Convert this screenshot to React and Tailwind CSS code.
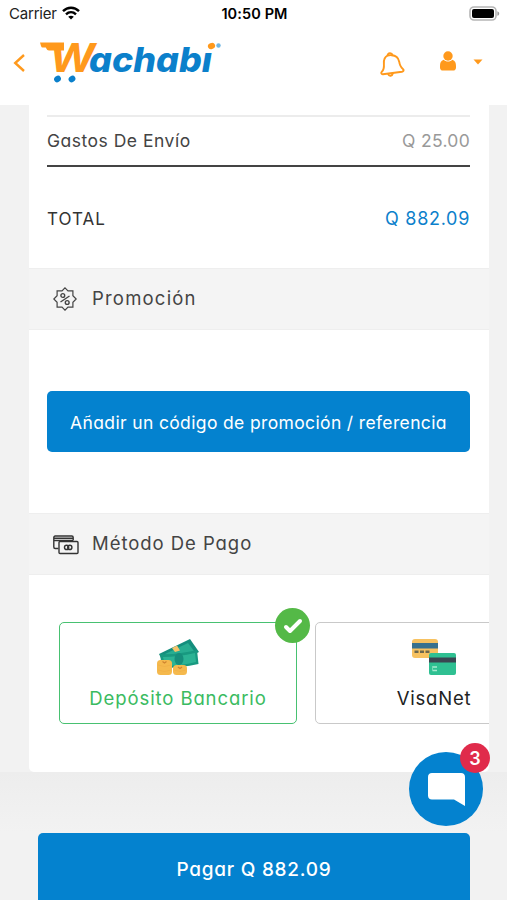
import React from 'react'

function StatusBar() {
  return (
    <div className="grid h-7 grid-cols-3 items-center pl-[9px] pr-[7px] text-[15px] text-[#222] [font-feature-settings:normal]">
      <div className="flex items-center gap-[5px]">
        <span className="tracking-[-0.2px]">Carrier</span>
        <svg className="-mt-[3px]" width="18" height="14" viewBox="0 0 18 14" fill="none" stroke="#000" strokeWidth="2.4">
          <path d="M1 5.2C5.6.6 12.4.6 17 5.2" />
          <path d="M4 8.4c2.9-2.8 7.1-2.8 10 0" />
          <path d="M9 13.5 6.2 10.7c1.6-1.4 4-1.4 5.6 0z" fill="#000" stroke="none" />
        </svg>
      </div>
      <span className="whitespace-nowrap text-center text-[14.5px] font-semibold tracking-[0.1px] text-black">10:50 PM</span>
      <svg className="-mt-[2px] justify-self-end" width="31" height="15" viewBox="0 0 31 15">
        <rect x="1" y="1" width="26" height="13" rx="4" fill="#fff" stroke="#b5b5b5" strokeWidth="1.6" />
        <rect x="3" y="3" width="22" height="9" rx="2" fill="#000" />
        <path d="M28.4 5.2c2.4.8 2.4 3.8 0 4.6z" fill="#999" />
      </svg>
    </div>
  )
}

function Logo() {
  return (
    <svg className="ml-[15px] -mt-1 overflow-visible" width="184" height="46" viewBox="0 0 184 46" fontFamily="Inter, sans-serif" fontWeight="800" fontStyle="italic">
      <path d="M0 4.500h24v8H9Q7 12.500 6.300 10.500L5.800 9.500H2.500Q1.500 9.500 1 8z" fill="#ff991c" />
      <text x="9" y="33.500" fontSize="40" fontWeight="700" textLength="46" lengthAdjust="spacingAndGlyphs" fill="#ff991c">W</text>
      <text x="49" y="33.500" fontSize="34" textLength="123" lengthAdjust="spacingAndGlyphs" fill="#0b80cb">achabı</text>
      <ellipse cx="171.500" cy="8" rx="3.700" ry="3" transform="rotate(-25 171.500 8)" fill="#ff991c" />
      <circle cx="178.500" cy="7.500" r="2.200" fill="#72b7e3" />
      <ellipse cx="17.500" cy="41" rx="3.600" ry="3" transform="rotate(-35 17.500 41)" fill="#0b80cb" />
      <ellipse cx="32" cy="41" rx="3.600" ry="3" transform="rotate(-35 32 41)" fill="#0b80cb" />
    </svg>
  )
}

function Header() {
  return (
    <header className="h-[105px] flex-shrink-0 bg-white">
      <StatusBar />
      <div className="flex h-[70px] items-center pl-[13px] pr-6">
        <svg width="12" height="18" viewBox="0 0 12 18" fill="none" stroke="#ff991c" strokeWidth="2.400">
          <path d="M11 1 2.200 9l8.800 8" />
        </svg>
        <Logo />
        <svg className="ml-auto mt-[3px]" width="26" height="26" viewBox="0 0 26 26" fill="none" stroke="#ff991c" strokeWidth="1.900" strokeLinejoin="round">
          <path d="M8.500 3.700C5.200 5.200 4.600 8.200 4.900 12c.3 4-.5 6.200-2 7.700-1.200 1.200-.6 2.700 1 2.600L23 19.700c1.700-.3 2.200-1.700.9-2.700-2.300-1.700-3.200-4-3.700-7.300C19.400 5.500 16 3.400 12.500 3.200 11 3.100 9.800 3.200 8.500 3.700z" />
          <path d="M8.500 3.700C8.900.7 12.700.4 13.700 3.300M9 22c1.100 2.600 4.300 2.200 5.100-.9" />
        </svg>
        <svg className="ml-[35px] -mt-1" width="16" height="20" viewBox="0 0 16 20" fill="#ff991c">
          <circle cx="8" cy="5" r="4.700" />
          <path d="M3.600 8.700c2.300 2.400 6.500 2.400 8.800 0 2.700.8 3.600 3.200 3.600 6.300v1.500c0 2-1.100 3.100-3 3.100H3c-1.900 0-3-1.100-3-3.100V15c0-3.100.9-5.500 3.600-6.300z" />
        </svg>
        <svg className="ml-[17px] -mt-[2px]" width="10" height="6" viewBox="0 0 10 6" fill="#ff991c">
          <path d="M.5.500h9L5 5.500z" />
        </svg>
      </div>
    </header>
  )
}

function PromoIcon() {
  return (
    <svg width="24" height="24" viewBox="0 0 24 24" fill="none" stroke="#444" strokeWidth="1.200">
      <path d="M12 .8l3 3h4.900v4.900L23.200 12l-3.300 3.300v4.900H15L12 23.200 9 20.200H4.100v-4.900L.8 12l3.300-3.300V3.800H9z" />
      <path d="M7.500 15l9-6" strokeWidth="1.400" />
      <circle cx="9.800" cy="8.500" r="1.900" strokeWidth="1.400" />
      <circle cx="14.200" cy="15.500" r="1.900" strokeWidth="1.400" />
    </svg>
  )
}

function PayIcon() {
  return (
    <svg className="mt-[2px]" width="26" height="20" viewBox="0 0 26 20" fill="none" stroke="#333" strokeWidth="1.400">
      <path d="M5.500 13.500H2.200C1.400 13.500.8 13 .8 12V2.500C.8 1.500 1.400 1 2.200 1h16.600c.8 0 1.400.5 1.400 1.500v3M1 3.300h19M1 5.500h19" />
      <rect x="6" y="6.500" width="19" height="12" rx="1" />
      <circle cx="13.600" cy="12.400" r="2.100" />
      <circle cx="16.800" cy="12.400" r="2.100" />
    </svg>
  )
}

function MoneyIcon() {
  return (
    <svg width="42" height="37" viewBox="0 0 42 37">
      <path d="M2 15 33 0l9 13-33 16z" fill="#148e7d" />
      <path d="M8 15 31 4l6 8-24 12z" fill="#28ad91" />
      <path d="M3 15q17 1 37-4l1.500 14Q24 29 5 29z" fill="#189980" />
      <path d="M6 18q15 0 32-4l1 9q-16 4-31 4z" fill="#2bb394" />
      <ellipse cx="22" cy="20" rx="4.500" ry="6" fill="#168e7b" />
      <path d="m15 9 5-2.500 3 5-5 1.500z" fill="#f5c36b" />
      <rect x="0" y="21" width="15" height="15" rx="3.500" fill="#f5b94d" />
      <rect x="16" y="26" width="14" height="10" rx="3.500" fill="#f5b94d" />
      <path d="M1 26q6.500 3 13 0M1 31q6.500 3 13 0M17 31q6 3 12 0" fill="none" stroke="#efad45" strokeWidth=".6" />
      <path d="m5.500 22.500 2 1.500 2-1.500M21 28l2 1.500 2-1.500" fill="none" stroke="#cf8430" strokeWidth="1.300" />
    </svg>
  )
}

function CardsIcon() {
  return (
    <svg width="44" height="36" viewBox="0 0 44 36">
      <rect x="0" y="0" width="26" height="19" rx="3" fill="#f7c261" />
      <path d="M0 4h26v5.500H0z" fill="#38718e" />
      <path d="M2.500 12.700H18" stroke="#6c684e" strokeWidth="2.400" strokeDasharray="4 1.500" />
      <rect x="17" y="14" width="27" height="22" rx="2" fill="#2fc092" />
      <path d="M17 18.500h27v5H17z" fill="#3a4651" />
      <path d="M20.500 28h4.500M20.500 31.500h4.500" stroke="#a6ead0" strokeWidth="1.500" />
      <path d="M20.500 27v5" stroke="#77d9b8" />
    </svg>
  )
}

function SectionTitle({ icon, children }) {
  return (
    <div className="flex h-[62px] items-center border-y border-[#eee] bg-[#f4f4f4] pl-[24px] text-[18.5px] text-[#444]">
      <span className="flex w-[39px]">{icon}</span>
      {children}
    </div>
  )
}

export default function App() {
  return (
    <div className="relative flex h-[900px] w-[507px] flex-col overflow-hidden bg-[#f2f2f2] font-['Inter',sans-serif] [font-feature-settings:'cv11']">
      <Header />
      <main className="ml-[29px] h-[667px] w-[460px] flex-shrink-0 overflow-hidden rounded-b-[5px] bg-white">
        <div className="ml-[18px] mr-[19px] mt-[10px] flex h-[50px] items-center justify-between border-t-2 border-[#ececec] text-[17.5px]">
          <span className="tracking-[0.5px] text-[#444]">Gastos De Envío</span>
          <span className="tracking-[0.3px] text-[#999]">Q 25.00</span>
        </div>
        <div className="ml-[18px] mr-[19px] flex h-[103px] items-center justify-between border-t-2 border-[#444] pt-[4px] text-[18px]">
          <span className="text-[17px] tracking-[1px] text-[#333]">TOTAL</span>
          <span className="-mt-[2px] tracking-[0.7px] text-[#0b80cb]">Q 882.09</span>
        </div>
        <SectionTitle icon={<PromoIcon />}>
          <span className="-mt-px tracking-[1.2px]">Promoción</span>
        </SectionTitle>
        <div className="py-[61px] pl-[18px] pr-[19px]">
          <button className="h-[61px] w-full whitespace-nowrap rounded-[5px] bg-[#0482cf] pt-[3px] text-[17.5px] tracking-[0.36px] text-white">
            Añadir un código de promoción / referencia
          </button>
        </div>
        <SectionTitle icon={<PayIcon />}>
          <span className="-mt-px tracking-[0.95px]">Método De Pago</span>
        </SectionTitle>
        <div className="flex gap-[18px] pl-[30px] pt-[47px] text-[18.5px]">
          <div className="relative flex h-[102px] w-[238px] flex-shrink-0 flex-col items-center rounded-[5px] border-[1.500px] border-[#48c171] pt-[16px] text-[#3abb61]">
            <MoneyIcon />
            <span className="mt-[9px] tracking-[0.9px]">Depósito Bancario</span>
            <span className="absolute -right-[14px] -top-[15px] flex h-[35px] w-[35px] items-center justify-center rounded-full bg-[#54b947]">
              <svg width="20" height="16" viewBox="0 0 20 16" fill="none" stroke="#fff" strokeWidth="4" strokeLinecap="round" strokeLinejoin="round">
                <path d="m3 9 4 4L17 3" />
              </svg>
            </span>
          </div>
          <div className="flex h-[102px] w-[238px] flex-shrink-0 flex-col items-center rounded-[5px] border-[1.500px] border-[#c9c9c9] pt-[16px] text-[#222]">
            <CardsIcon />
            <span className="mt-[10px] tracking-[0.8px]">VisaNet</span>
          </div>
        </div>
      </main>
      <div className="h-[61px] flex-shrink-0 bg-gradient-to-b from-[#ededed] to-[#f2f2f2]" />
      <button className="ml-[38px] mr-[37px] h-[67px] flex-shrink-0 rounded-t-[5px] bg-[#0482cf] pt-[7px] text-[19px] font-medium tracking-[0.75px] text-white">
        Pagar Q 882.09
      </button>
      <div className="absolute left-[409px] top-[752px] flex h-[74px] w-[74px] items-center justify-center rounded-full bg-[#0482cf]">
        <svg width="37" height="33" viewBox="0 0 37 33" fill="#fff">
          <path d="M4 0h29c2.500 0 4 1.500 4 4v29l-11-6.500H4c-2.500 0-4-1.500-4-4V4c0-2.500 1.500-4 4-4z" />
        </svg>
        <span className="absolute -right-[7px] -top-[9px] flex h-[30px] w-[30px] items-center justify-center rounded-full bg-[#e02b4b] text-[18px] font-semibold text-white">3</span>
      </div>
    </div>
  )
}
